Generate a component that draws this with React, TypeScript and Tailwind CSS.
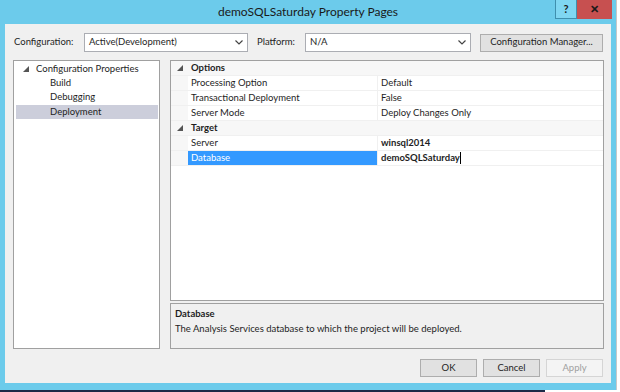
const font = "font-['Lato','Liberation_Sans',sans-serif]";

const Chevron = () => (
  <svg width="8" height="5" viewBox="0 0 8 5" className="shrink-0">
    <path d="M0.5 0.5 L4 4 L7.5 0.5" fill="none" stroke="#444" strokeWidth="1.2" />
  </svg>
);

const Expander = () => (
  <svg width="6" height="6" viewBox="0 0 6 6" className="shrink-0">
    <path d="M6 0 L6 6 L0 6 Z" fill="#555" />
  </svg>
);

const Dropdown = ({ value, width }: { value: string; width: string }) => (
  <div className={`${width} h-[19px] bg-white border border-[#abadb3] flex items-center justify-between pl-[4px] pr-[4px]`}>
    <span>{value}</span>
    <Chevron />
  </div>
);

const PropRow = ({ name, value, bold, selected }: { name: string; value: string; bold?: boolean; selected?: boolean }) => (
  <div className="flex h-[15px] border-b border-[#f0f0f0]">
    <div className="w-[17px] bg-[#f7f7f7]" />
    <div className={`w-[190px] pl-[3px] flex items-center border-r border-[#f0f0f0] ${selected ? "bg-[#3399ff] text-white" : ""}`}>
      {name}
    </div>
    <div className={`flex-1 pl-[3px] flex items-center ${bold ? "font-bold" : ""}`}>
      {value}
      {selected && <span className="w-px h-[12px] bg-black" />}
    </div>
  </div>
);

const Category = ({ label }: { label: string }) => (
  <div className="flex h-[15px] bg-[#f7f7f7] border-b border-[#f0f0f0] items-center">
    <div className="w-[17px] flex justify-center items-center">
      <Expander />
    </div>
    <span className="pl-[3px] font-bold">{label}</span>
  </div>
);

const DlgButton = ({ label, disabled }: { label: string; disabled?: boolean }) => (
  <div
    className={`w-[57px] h-[18px] flex items-center justify-center border ${
      disabled ? "border-[#d5d5d5] bg-[#f4f4f4] text-[#a0a0a0]" : "border-[#adadad] bg-[#e1e1e1]"
    }`}
  >
    {label}
  </div>
);

export default function App() {
  return (
    <div className={`w-[620px] h-[392px] flex flex-col bg-white overflow-hidden text-[9.5px] text-[#1e1e1e] ${font}`}>
      <div className="flex h-[390px]">
        <div className="w-[616px] shrink-0 bg-[#6ccbeb] flex flex-col px-[5px] pb-[7px]">
          <div className="h-[24px] relative flex items-center justify-center">
            <span className="text-[12px] text-[#1a1a1a]">demoSQLSaturday Property Pages</span>
            <div className="absolute right-[-1px] top-0 h-[19px] flex">
              <div className="w-[22px] h-[19px] bg-[#7fd6f2] border-l border-b border-r border-[#3f8fae] flex items-center justify-center font-bold text-[11px] text-[#1a1a1a]">
                ?
              </div>
              <div className="w-[35px] h-[19px] bg-[#c75050] flex items-center justify-center font-bold text-[11px] text-[#1a1a1a]">
                ✕
              </div>
            </div>
          </div>
          <div className="flex-1 bg-[#f0f0f0] flex flex-col pt-[9px] pl-[8px] pr-[7px]">
            <div className="flex items-center h-[19px]">
              <span className="w-[71px] pl-[1px]">Configuration:</span>
              <Dropdown value="Active(Development)" width="w-[164px]" />
              <span className="ml-[9px] w-[48px]">Platform:</span>
              <Dropdown value="N/A" width="w-[166px]" />
              <div className="ml-[9px] w-[123px] h-[18px] border border-[#adadad] bg-[#e1e1e1] flex items-center justify-center">
                Configuration Manager...
              </div>
            </div>
            <div className="flex mt-[8px] gap-[10px] h-[289px]">
              <div className="w-[147px] bg-white border border-[#a0a0a0] pt-[1px] pl-[2px] pr-px">
                <div className="h-[14px] flex items-center pl-[7px] gap-[7px]">
                  <Expander />
                  <span>Configuration Properties</span>
                </div>
                <div className="h-[14px] flex items-center pl-[34px]">Build</div>
                <div className="h-[15px] flex items-center pl-[34px]">Debugging</div>
                <div className="h-[14px] flex items-center pl-[34px] bg-[#cccedb]">Deployment</div>
              </div>
              <div className="w-[434px] flex flex-col gap-[2px]">
                <div className="h-[241px] bg-white border border-[#a0a0a0] flex flex-col">
                  <Category label="Options" />
                  <PropRow name="Processing Option" value="Default" />
                  <PropRow name="Transactional Deployment" value="False" />
                  <PropRow name="Server Mode" value="Deploy Changes Only" />
                  <Category label="Target" />
                  <PropRow name="Server" value="winsql2014" bold />
                  <PropRow name="Database" value="demoSQLSaturday" bold selected />
                </div>
                <div className="flex-1 border border-[#a0a0a0] bg-[#f0f0f0] px-[4px] pt-[3px] flex flex-col">
                  <span className="font-bold leading-[14px]">Database</span>
                  <span className="leading-[14px] mt-[1px]">The Analysis Services database to which the project will be deployed.</span>
                </div>
              </div>
            </div>
            <div className="flex justify-end gap-[6px] mt-[10px] pr-[1px]">
              <DlgButton label="OK" />
              <DlgButton label="Cancel" />
              <DlgButton label="Apply" disabled />
            </div>
          </div>
        </div>
        <div className="flex-1 bg-white border-l border-[#c8c8c8]" />
      </div>
      <div className="flex h-[2px]">
        <div className="w-[545px] bg-[#1b2a47]" />
        <div className="flex-1 bg-white" />
      </div>
    </div>
  );
}
